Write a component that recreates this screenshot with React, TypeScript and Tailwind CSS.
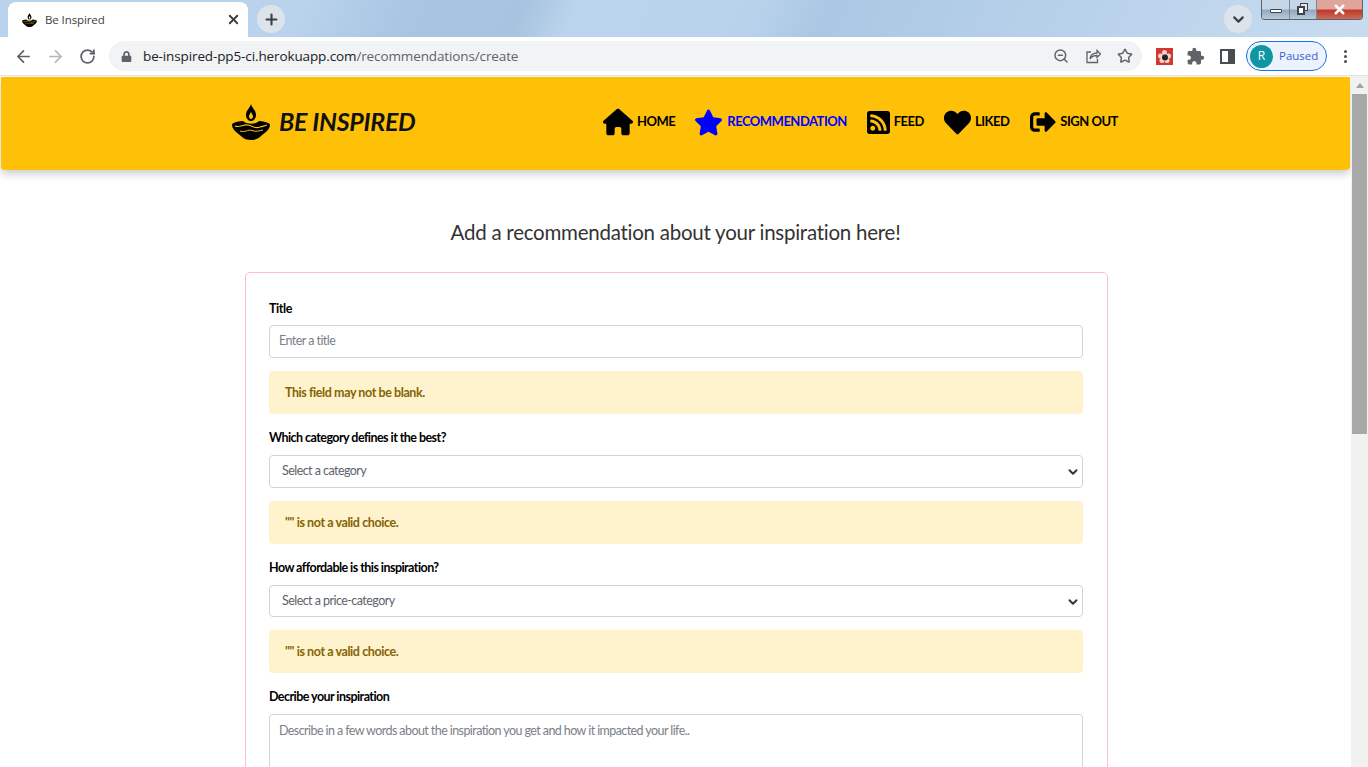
import { ArrowLeft, ArrowRight, ChevronDown, Plus, RotateCw, Star, X, ZoomOut } from "lucide-react";
import { FaHeart, FaLock, FaRssSquare, FaSignOutAlt, FaStar } from "react-icons/fa";
import { FaHouse } from "react-icons/fa6";
import { MdExtension } from "react-icons/md";

const FONT = "font-['Lato','Liberation_Sans',sans-serif]";

function Diya({ className }: { className: string }) {
	return (
		<svg viewBox="0 0 38 36" className={className} fill="currentColor">
			<path
				fillRule="evenodd"
				d="M19 0C20 4 24 6 24 11C24 15 21 17 19 17C17 17 14 15 14 11C14 6 18 4 19 0ZM19 8C18 10 17 11 17 12.500C17 14 18 15 19 15C20 15 21 14 21 12.500C21 11 20 10 19 8Z"
			/>
			<path d="M0 21C0 19 4 17.500 11 17L13 18.500C16 20 22 20 25 18.500L27 17C33 17.500 38 19 38 21C38 25 33 29 29 32C26 35 22 36 19 36C15 36 12 35 9 32C5 29 0 25 0 21Z" />
			<path d="M3 22C8 24 11 20 16 21C21 22 23 25 28 23C31 22 33 22 35 21" fill="none" stroke="#ffc107" strokeWidth="1.200" />
			<path d="M8 27C13 29 16 25 20 26.500C24 28 27 27 31 26" fill="none" stroke="#ffc107" strokeWidth="1" />
		</svg>
	);
}

function Window() {
	return (
		<div className="flex h-[20px] w-[102px] overflow-hidden rounded-b-[4px] border border-t-0 border-[#5a6470]">
			<div className="flex w-[28px] items-center justify-center border-r border-[#7d8894] bg-[linear-gradient(#c5d6e8_45%,#94a8bd_55%,#b9cbdd)]">
				<div className="mt-[3px] h-[4px] w-[12px] rounded-[1px] border border-[#3c4650] bg-white" />
			</div>
			<div className="relative flex w-[27px] items-center justify-center border-r border-[#7d8894] bg-[linear-gradient(#c5d6e8_45%,#94a8bd_55%,#b9cbdd)]">
				<div className="absolute left-[10px] top-[3px] h-[8px] w-[8px] border border-[#3c4650] bg-[#dfe7ef]" />
				<div className="absolute left-[7px] top-[6px] h-[9px] w-[8px] border-2 border-[#3c4650] bg-white" />
			</div>
			<div className="flex flex-1 items-center justify-center bg-[linear-gradient(#e0a49a_45%,#c0392b_55%,#cf6a58)]">
				<X size={15} strokeWidth={4} className="text-white" />
			</div>
		</div>
	);
}

function TabStrip() {
	return (
		<div className="flex h-[37px] shrink-0 bg-[linear-gradient(115deg,#b9d3ec_0%,#b9d3ec_22%,#a9c5e2_30%,#a7c3df_38%,#bcd5ee_42%,#b8d2ec_55%,#abc7e3_60%,#b6d0ea_75%,#c8dcf0_100%)] pt-[2px]">
			<div className="ml-[8px] flex h-[35px] w-[240px] items-center rounded-t-[8px] bg-white pl-[14px] pr-[7px] font-['Open_Sans',sans-serif] text-[11.5px] tracking-[-0.1px] text-[#3c4043]">
				<Diya className="h-[14px] w-[15px] text-black" />
				<span className="ml-[8px] flex-1">Be Inspired</span>
				<X size={15} strokeWidth={3} className="text-[#3c4043]" />
			</div>
			<div className="ml-[9px] mt-[3px] flex h-[28px] w-[28px] items-center justify-center rounded-full bg-[#dde3ea]">
				<Plus size={17} strokeWidth={3} className="text-[#3c4043]" />
			</div>
			<div className="ml-auto mt-[3px] flex h-[28px] w-[28px] items-center justify-center rounded-full bg-[#dde3ea]">
				<ChevronDown size={17} strokeWidth={3} className="text-[#3c4043]" />
			</div>
			<div className="-mt-[2px] ml-[9px] mr-[5px]">
				<Window />
			</div>
		</div>
	);
}

function Toolbar() {
	return (
		<div className="flex h-[39px] shrink-0 items-center border-b border-[#e3e3e3] bg-white font-['Open_Sans',sans-serif]">
			<ArrowLeft size={19} strokeWidth={2.200} className="ml-[14px] text-[#5f6368]" />
			<ArrowRight size={19} strokeWidth={2.200} className="ml-[13px] text-[#b4b7bb]" />
			<RotateCw size={17} strokeWidth={2.500} className="ml-[14px] text-[#5f6368]" />
			<div className="ml-[13px] flex h-[30px] w-[1033px] items-center rounded-full bg-[#f1f3f4] pl-[12px] pr-[9px]">
				<FaLock size={11} className="text-[#5f6368]" />
				<div className="ml-[11px] flex-1 text-[13.5px] tracking-[-0.12px] text-[#202124]">
					be-inspired-pp5-ci.herokuapp.com<span className="text-[#5f6368]">/recommendations/create</span>
				</div>
				<ZoomOut size={16} strokeWidth={2.200} className="text-[#5f6368]" />
				<svg viewBox="0 0 16 16" className="ml-[16px] h-[16px] w-[16px] text-[#5f6368]" fill="none" stroke="currentColor" strokeWidth="1.300">
					<path d="M6 4H2v10.500h10.500V11" />
					<path d="M5 11c.5-4 3.500-6 7-6V2.500L15.500 6 12 9.500V7.500c-3 0-5.500 1-7 3.500z" />
				</svg>
				<Star size={16} strokeWidth={2.200} className="ml-[16px] text-[#5f6368]" />
			</div>
			<svg viewBox="0 0 17 17" className="ml-[14px] h-[17px] w-[17px]">
				<rect width="17" height="17" fill="#d3382f" />
				<circle cx="8.500" cy="4.500" r="2.500" fill="#f5d5d0" />
				<circle cx="4.500" cy="8" r="2.500" fill="#f5d5d0" />
				<circle cx="12.500" cy="8" r="2.500" fill="#f5d5d0" />
				<circle cx="6" cy="12.500" r="2.500" fill="#f5d5d0" />
				<circle cx="11" cy="12.500" r="2.500" fill="#f5d5d0" />
				<circle cx="9" cy="9.500" r="3" fill="#222" />
			</svg>
			<MdExtension size={19} className="ml-[13px] text-[#5f6368]" />
			<div className="ml-[15px] flex h-[15px] w-[15px] justify-end border-2 border-[#4a4d50]">
				<div className="h-full w-[5px] bg-[#4a4d50]" />
			</div>
			<div className="ml-[11px] flex h-[30px] w-[81px] items-center rounded-full border border-[#1a73e8] bg-[#edf3fd] pl-[3px]">
				<div className="flex h-[23px] w-[23px] items-center justify-center rounded-full bg-[#0f96a5] text-[12px] text-white">R</div>
				<span className="ml-[6px] text-[11.5px] text-[#3b5fd0]">Paused</span>
			</div>
			<div className="ml-[17px] flex flex-col gap-[2px]">
				<div className="h-[3px] w-[3px] rounded-full bg-[#4a4d50]" />
				<div className="h-[3px] w-[3px] rounded-full bg-[#4a4d50]" />
				<div className="h-[3px] w-[3px] rounded-full bg-[#4a4d50]" />
			</div>
		</div>
	);
}

function NavLink({ icon, label, active, className }: { icon: React.ReactNode; label: string; active?: boolean; className: string }) {
	return (
		<div className={`flex items-center ${className} ${active ? "text-[#0000ff]" : "text-black"}`}>
			{icon}
			<span className="ml-[4px] text-[13px] font-bold tracking-[-0.5px]">{label}</span>
		</div>
	);
}

function Navbar() {
	return (
		<nav className="relative z-10 mx-px flex h-[93px] shrink-0 items-center rounded-b-[4px] bg-[#ffc107] pb-[3px] pl-[231px] shadow-[0_4px_8px_rgba(0,0,0,0.2)]">
			<Diya className="h-[36px] w-[38px] text-black" />
			<span className="ml-[9px] w-[137px] whitespace-nowrap text-[25px] font-bold italic tracking-[-0.3px] text-[#111]">BE INSPIRED</span>
			<div className="ml-[187px] flex items-center">
				<NavLink icon={<FaHouse size={30} />} label="HOME" className="" />
				<NavLink icon={<FaStar size={29} />} label="RECOMMENDATION" active className="ml-[19px]" />
				<NavLink icon={<FaRssSquare className="h-[27px] w-[23px]" />} label="FEED" className="ml-[20px]" />
				<NavLink icon={<FaHeart size={27} />} label="LIKED" className="ml-[20px]" />
				<NavLink icon={<FaSignOutAlt size={26} />} label="SIGN OUT" className="ml-[21px]" />
			</div>
		</nav>
	);
}

function Alert({ text }: { text: string }) {
	return (
		<div className="mt-[13px] flex h-[43px] items-center rounded-[4px] bg-[#fff3cd] pl-[16px] pt-[2px] text-[12.500px] font-bold tracking-[-0.42px] text-[#856404]">
			{text}
		</div>
	);
}

function SelectField({ label, placeholder, selectClass }: { label: string; placeholder: string; selectClass: string }) {
	return (
		<div className="mt-[15px]">
			<label className="block h-[18px] text-[12.500px] font-bold leading-[18px] tracking-[-0.55px] text-black">{label}</label>
			<div className="relative mt-[8px]">
				<select className={`${selectClass} w-full appearance-none rounded-[4px] border border-[#ced4da] bg-white pl-[12px] text-[12.500px] tracking-[-0.55px] text-[#5c636a]`}>
					<option>{placeholder}</option>
				</select>
				<ChevronDown size={14} strokeWidth={3.500} className="absolute right-[3px] top-[10px] text-[#343a40]" />
			</div>
			<Alert text={'"" is not a valid choice.'} />
		</div>
	);
}

export default function App() {
	return (
		<div className={`flex h-screen flex-col overflow-hidden bg-white ${FONT}`}>
			<TabStrip />
			<Toolbar />
			<div className="flex min-h-0 flex-1">
				<div className="min-w-0 flex-1 overflow-hidden pt-px">
					<Navbar />
					<h1 className="mt-[48px] text-center text-[20.500px] leading-[28px] tracking-[-0.25px] text-[#333]">
						Add a recommendation about your inspiration here!
					</h1>
					<form className="ml-[245px] mt-[26px] h-[600px] w-[863px] rounded-t-[5px] border border-[#ffc0cb] pl-[23px] pr-[24px] pt-[27px]">
						<label className="block h-[18px] text-[12.500px] font-bold leading-[18px] tracking-[-0.4px] text-black">Title</label>
						<input
							placeholder="Enter a title"
							className="mt-[7px] block h-[33px] w-full rounded-[4px] border border-[#ced4da] pb-[3px] pl-[9px] text-[12.500px] tracking-[-0.55px] outline-none placeholder:text-[#7a8088]"
						/>
						<Alert text="This field may not be blank." />
						<SelectField label="Which category defines it the best?" placeholder="Select a category" selectClass="h-[33px]" />
						<SelectField label="How affordable is this inspiration?" placeholder="Select a price-category" selectClass="h-[32px]" />
						<label className="mt-[15px] block h-[18px] text-[12.500px] font-bold leading-[18px] tracking-[-0.55px] text-black">Decribe your inspiration</label>
						<textarea
							placeholder="Describe in a few words about the inspiration you get and how it impacted your life.."
							className="mt-[8px] block h-[120px] w-full resize-none rounded-[4px] border border-[#ced4da] px-[9px] pb-[5px] pt-[7px] text-[12.500px] tracking-[-0.58px] outline-none placeholder:text-[#7a8088]"
						/>
					</form>
				</div>
				<div className="flex w-[17px] shrink-0 flex-col items-center bg-[#f1f1f1]">
					<div className="mt-[7px] h-0 w-0 border-x-[4px] border-b-[5px] border-x-transparent border-b-[#a3a3a3]" />
					<div className="mt-[6px] h-[340px] w-[15px] bg-[#a8a8a8]" />
				</div>
			</div>
		</div>
	);
}
